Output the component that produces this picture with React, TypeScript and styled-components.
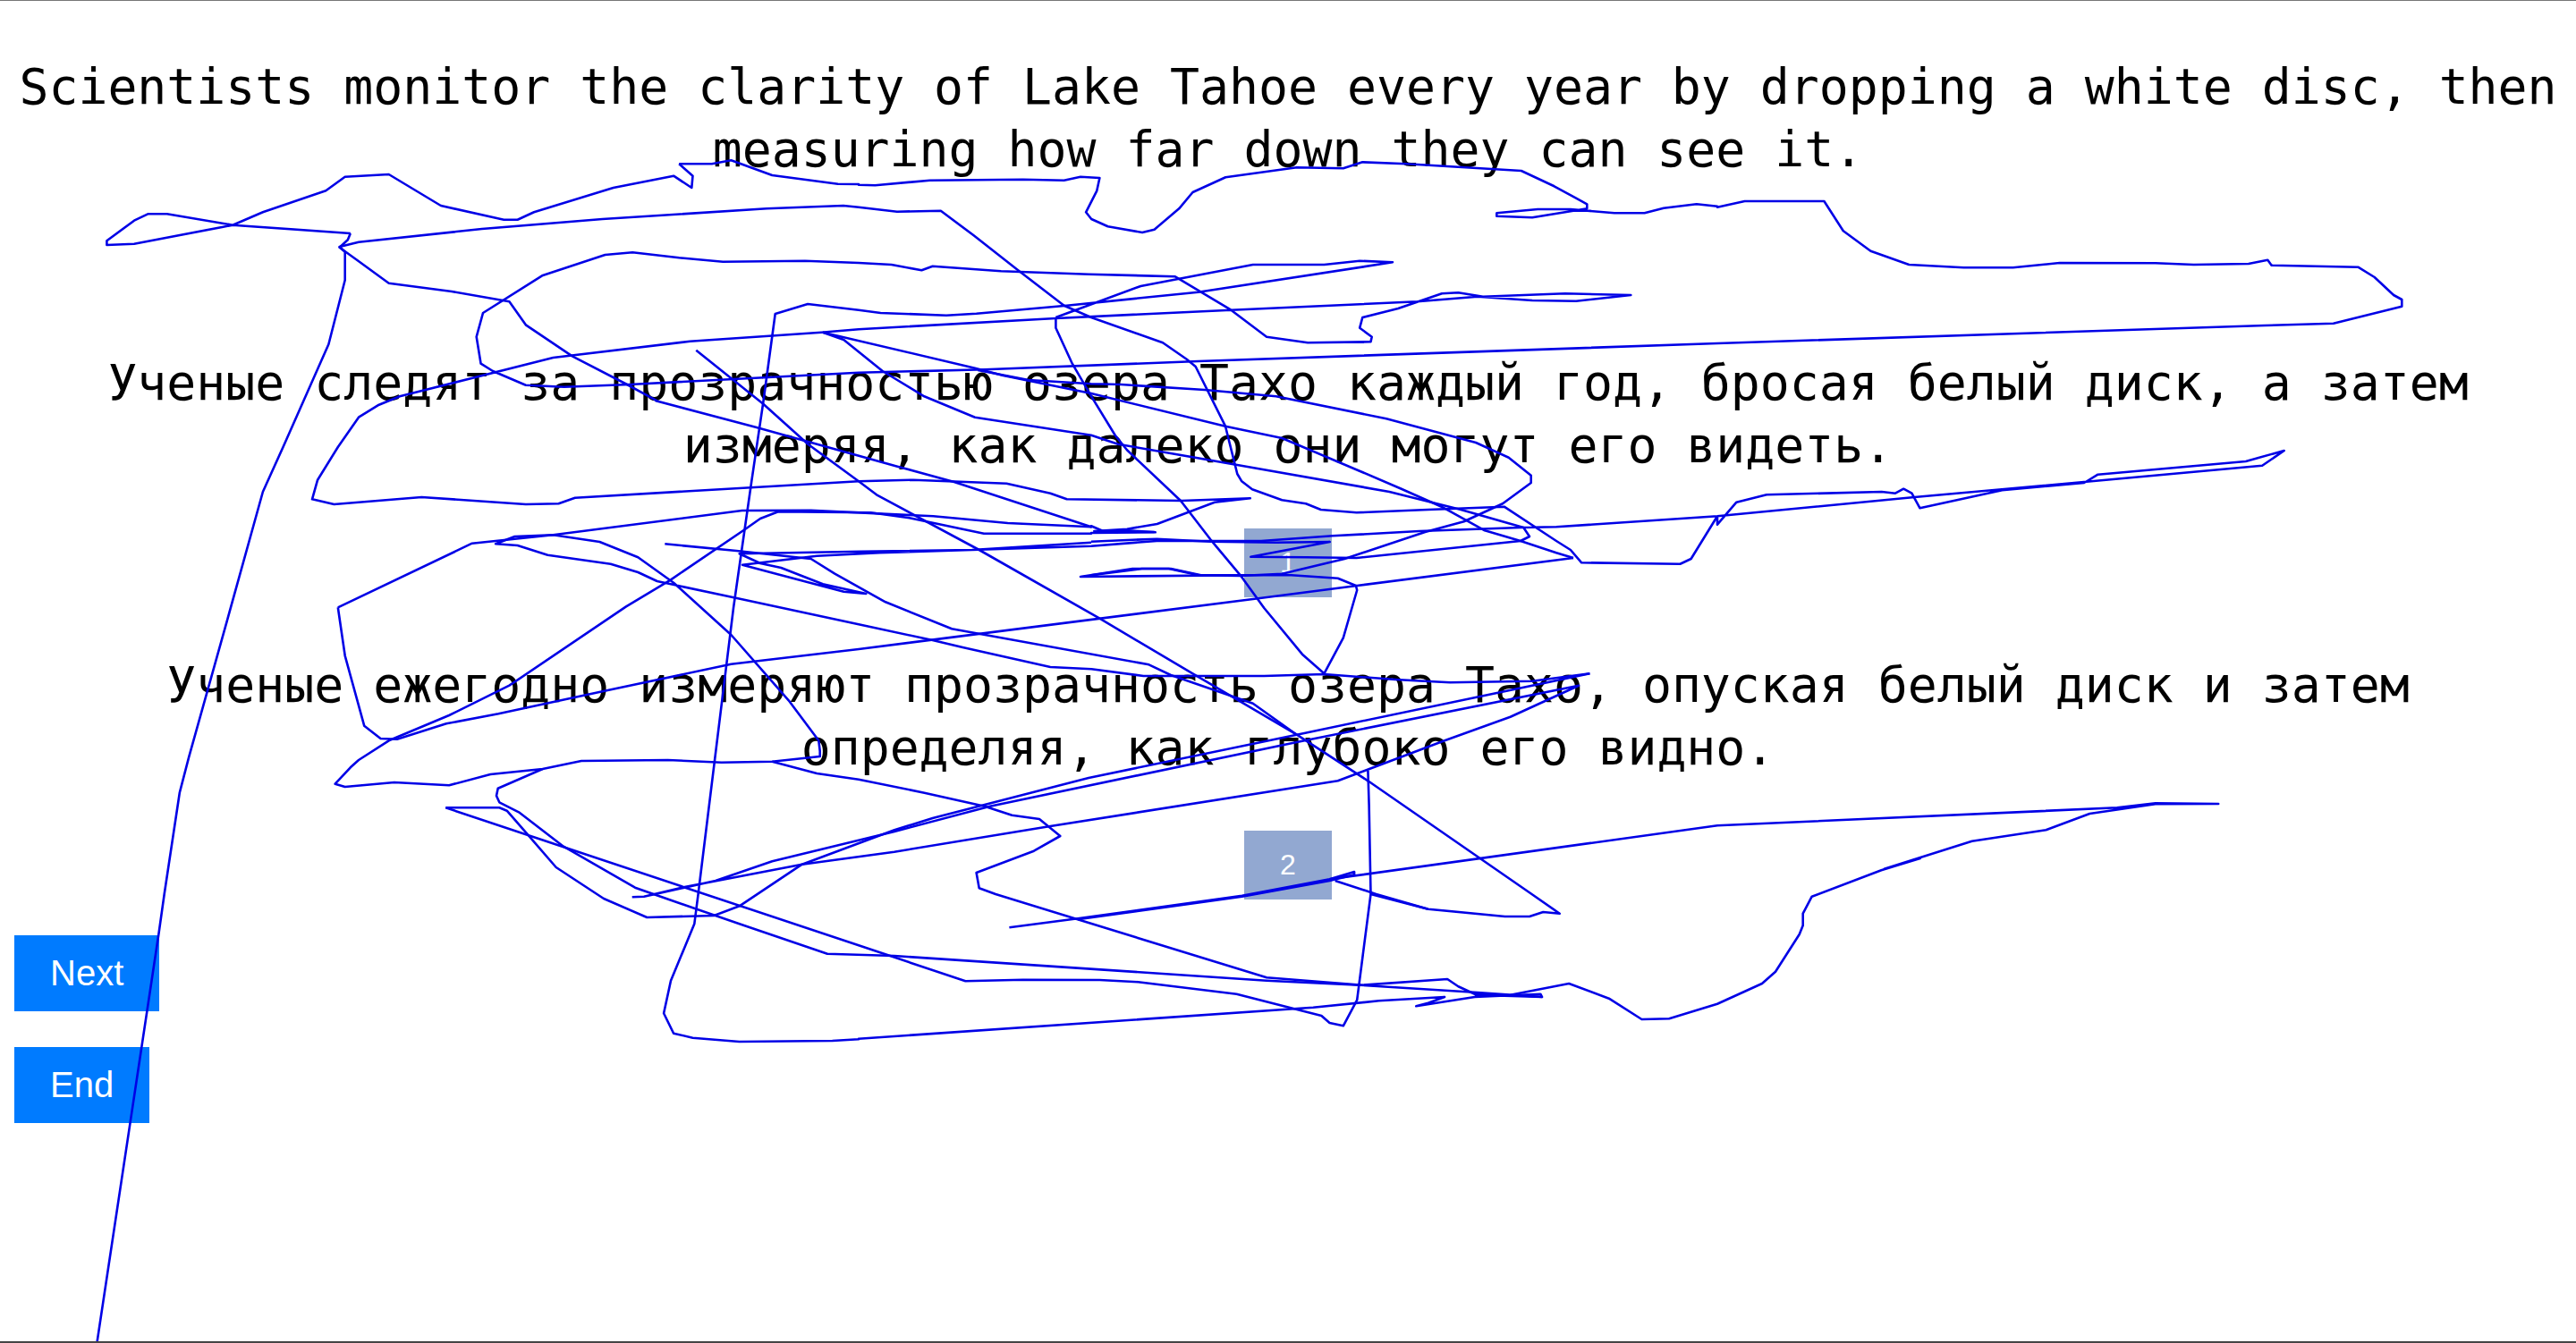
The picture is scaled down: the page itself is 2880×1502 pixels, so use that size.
import React from "react";
import styled, { createGlobalStyle } from "styled-components";

const Global = createGlobalStyle`
  html, body { margin: 0; padding: 0; background: #fff; }
  #root { width: 2880px; height: 1502px; overflow: hidden; }
`;

const Page = styled.main`
  position: relative;
  box-sizing: border-box;
  width: 2880px;
  height: 1502px;
  padding-top: 61px;
  border-top: 1px solid #777;
  border-bottom: 2px solid #444;
  background: #fff;
  overflow: hidden;
`;

const Passage = styled.p<{ $gap: number }>`
  margin: ${(p) => p.$gap}px 0 0;
  padding: 0 16px;
  font-family: "DejaVu Sans Mono", monospace;
  font-size: 54.8px;
  line-height: 70px;
  color: #000;
  text-align: center;
`;

const BadgeRow = styled.div`
  display: flex;
  justify-content: center;
  margin-top: 58px;
`;

const Badge = styled.div`
  padding: 20px 40px;
  height: 37px;
  background: #92a8d1;
  color: #fff;
  font-family: "Liberation Sans", Arial, sans-serif;
  font-size: 32px;
  line-height: 37px;
`;

const Actions = styled.div`
  display: flex;
  flex-direction: column;
  align-items: flex-start;
  gap: 40px;
  margin: 40px 0 0 16px;
`;

const ActionButton = styled.button`
  height: 85px;
  padding: 0 40px;
  border: 0;
  border-radius: 0;
  background: #007bff;
  color: #fff;
  font-family: "Liberation Sans", Arial, sans-serif;
  font-size: 40px;
`;

const Scribble = styled.svg`
  position: absolute;
  left: 0;
  top: -1px;
  width: 2880px;
  height: 1502px;
  pointer-events: none;
`;

type Part = [string, string];
const origins: Record<string, [number, number, number, number]> = {
  T1: [0, 0, 1.6333, 3],
  T2: [960, 0, 1.6333, 3],
  T3: [1920, 0, 1.6333, 3],
  T4: [0, 500, 1.6333, 3],
  T5: [960, 500, 1.6333, 3],
  T6: [1920, 500, 1.6333, 3],
  T7: [0, 1000, 1.6333, 3],
  T8: [960, 1000, 1.6333, 3],
  Z9: [1920, 960, 3, 3],
  Z10: [700, 340, 3, 3],
  Z11: [1220, 340, 3, 3],
  Z12: [480, 840, 3, 3],
};

const chains: Part[][] = [
  [
    ["T1", "1240,550 1300,550 1335,538 1410,588 1530,617 1568,618"],
    ["T2", "0,620 30,622 130,605 300,602 375,605 405,593 440,597 435,640 415,712 425,735 455,760 518,780 540,770 585,700 610,645 670,595 800,562 885,565 920,544 1000,550 1210,573 1270,625 1310,665 1330,685 1330,700 1230,730 1165,725 1165,715 1240,702 1300,702 1380,715 1435,715 1470,698 1530,685 1568,692"],
    ["T3", "0,695 50,675 195,675 230,775 280,842 350,888 450,898 540,898 625,882 800,883 870,888 970,885 1005,872 1012,890 1170,896 1200,930 1235,990 1250,1005 1250,1028 1125,1085 1000,1092 0,1152"],
    ["T2", "620,1212 230,1240 0,1250"],
    ["T1", "1150,1290 1030,1298 960,1292 900,1245 878,1220 870,1130 882,1050 990,925 1105,855 1155,847 1240,865 1320,878 1470,875 1568,882"],
    ["T2", "0,882 60,888 115,907 135,893 260,910 420,920 578,928 680,1040 745,1130 820,1150 935,1147 937,1130 915,1100 920,1065 985,1035 1065,985 1095,982 1140,995 1290,985 1410,990 1310,1010 1230,1008 1130,995 1020,1012 680,1040 360,1068 0,1105"],
    ["T1", "1500,1115 1260,1145 1010,1200 730,1330 690,1360 655,1400 617,1500"],
    ["T4", "580,110 570,175 610,192 770,168 960,192 1020,190 1050,170 1568,115"],
    ["T5", "100,110 270,122 350,155 380,175 590,180 715,172 650,185 545,258 490,275 430,282 540,285"],
  ],
  [
    ["T2", "360,1065 515,960 720,888 850,888 915,875 975,880 620,980 380,1025 215,1052 160,1058 40,1050 0,1040"],
    ["T1", "1475,1020 1417,1052"],
    ["Z10", "500,33 460,330 420,600 370,950 360,1020"],
    ["T7", "1275,0 1268,100 1225,290 1212,400 1230,467 1265,482 1350,495 1520,492 1568,487"],
    ["T8", "0,485 830,380 950,358 1070,345 1040,365 1018,376 1125,345 1190,340 1245,335 1248,345 1125,338"],
  ],
  [
    ["T2", "360,1065 360,1100 390,1220 425,1330"],
    ["Z11", "80,440 120,490 300,660 400,790 500,910 580,1020"],
    ["T5", "810,695 850,760 885,640 910,480 908,465 875,440 790,430 625,430 570,408 500,408 405,435 700,430"],
  ],
  [
    ["T1", "640,783 635,805 620,830 650,870 710,950 825,978 930,1012 960,1090 1045,1195 1145,1290 1200,1345"],
    ["Z10", "100,325 440,415 910,545 1100,597 1560,748"],
    ["Z11", "0,745 40,762 125,760 215,766 0,768"],
    ["Z10", "1560,770 1200,770 950,718 820,700 510,697 450,720 400,755 150,925 0,1015"],
    ["T4", "930,800 820,900 710,985 655,1050 640,1075 612,1130 630,1140 720,1125 820,1135"],
    ["Z12", "205,78 380,60 510,33 800,30 980,38 1150,35 1310,18 1310,0"],
    ["T4", "1495,985 1440,850 1335,630 1230,455 1165,370 1095,318 1010,295 940,300 905,325 945,330 1000,362 1115,392 1165,420 1200,450 1340,505 1568,595"],
    ["T5", "135,648 190,672 350,738 425,745 520,768 740,768 850,762 980,780 1080,790 1230,785 1335,760"],
  ],
  [
    ["T4", "617,538 862,323 1010,295 1355,213"],
    ["Z10", "620,692 1030,712 1280,735 1560,748"],
  ],
  [
    ["T4", "617,538 630,700 665,935 695,978 725,980 815,928 910,895 1100,820 1335,728 1568,678"],
    ["T5", "720,510 910,465 1305,372"],
  ],
  [
    ["Z10", "1560,800 1160,825 790,830 380,838 450,870 520,885 660,940 805,972 730,965 520,910 390,875 640,845 850,835 1160,825 1560,812"],
    ["Z11", "0,812 220,795 570,795 810,778 1100,762 1440,750 1560,748"],
    ["T5", "1568,232"],
    ["T6", "360,168 665,118 995,62 1035,12 965,48 695,92 670,120 520,145 370,205 355,155 340,140 325,155 300,150 90,160 35,185 0,260"],
    ["T5", "1568,232 1520,375 1500,392 1320,388 1300,345"],
    ["Z11", "1560,795 1385,680 1130,690 890,700 770,690 720,670 640,658 540,622 505,595 490,570 450,410 350,210 320,185 240,130 0,45"],
    ["T2", "375,1025 290,905 210,790 150,707 70,710 0,695"],
    ["T1", "1540,690 1400,700 1100,735 880,768 655,812 620,828 630,845 630,940 600,1155 517,1500"],
    ["T4", "480,150 415,580 377,830 345,1040 328,1160 300,1500"],
    ["T7", "290,130 177,1506"],
  ],
  [
    ["Z10", "1180,222 1350,255 1560,268"],
    ["Z11", "100,270 380,288 620,310 990,385 1290,465 1400,515 1475,575 1475,600 1380,670 1250,730 1120,765 850,855 640,905 500,912 360,910 260,888 170,888 0,910"],
  ],
  [
    ["Z10", "660,95 1170,215 1265,240 1560,300"],
    ["Z11", "450,410 640,450 900,560 1040,620 1175,680 1320,760 1440,795 1560,835"],
    ["T5", "1305,372"],
  ],
  [
    ["Z10", "660,95 730,120 860,225 1000,310 1170,380 1560,440"],
    ["Z11", "90,470 490,540 1000,630 1240,690 1450,750 1470,780 1440,795 890,852 720,850 535,848 800,798 620,800 400,797 220,788 0,797"],
  ],
  [
    ["Z10", "235,155 460,335 610,470 780,595 840,640"],
    ["T5", "220,345 440,575 610,760 800,965 930,1120 1225,1495"],
    ["T8", "1280,65 1250,60 1225,75 1180,75 1040,50 935,0"],
  ],
  [
    ["Z10", "130,805 370,828 620,855 700,905 870,1000"],
    ["T5", "170,610 530,730 570,765 720,860 800,965"],
  ],
  [
    ["Z12", "1150,35 1300,75"],
    ["T4", "1568,1115"],
    ["T5", "120,1160 230,1205 280,1235 330,1248 368,1305 320,1355 215,1428 220,1480 250,1500"],
    ["T8", "745,280 920,305 1075,285 1095,310 1125,335 1190,340"],
  ],
  [
    ["Z12", "380,60 230,125 225,150 235,172 300,205 450,320 690,458 780,490 1040,580 1335,680"],
    ["T8", "65,207 745,290 915,305 1130,330 1248,345"],
  ],
  [
    ["Z12", "55,190 235,190 260,200 330,280 425,390 585,495 730,558 955,552 1040,520 1250,380 1560,265"],
    ["T5", "135,1245 420,1110 800,965 1335,760"],
  ],
  [
    ["Z12", "680,490 720,488 960,435 1150,370 1560,270"],
    ["T5", "240,1205 800,990 1315,800 1190,905 1070,985 925,1085 875,1120 350,1272 65,1358"],
    ["Z12", "1250,380 860,455 720,488"],
  ],
  [
    ["Z12", "55,190"],
    ["T8", "0,172 195,292 300,287 440,288 510,295 690,335 845,408 860,432 885,442 910,355 935,0"],
    ["T5", "932,1200 930,1085"],
  ],
  [
    ["T8", "275,112 400,82 700,5"],
    ["T5", "860,1450 905,1425 905,1435 860,1455"],
    ["T8", "700,8 400,85"],
  ],
  [
    ["T5", "860,1450 1568,1270"],
    ["T6", "730,1210 800,1195 915,1197 800,1198 680,1230 600,1285 465,1322 305,1415"],
    ["Z9", "680,0 550,40 317,128 287,185 287,225 275,255 195,380 150,420 0,488"],
    ["T8", "1480,418 1430,420 1370,350 1297,300 1190,338"],
  ],
  [
    ["T5", "870,1455 945,1500"],
    ["T8", "1040,50"],
  ],
  [
    ["T1", "1240,550 1265,590 1263,630 1230,590 1120,630 975,712 945,737 920,737 805,690 710,585 630,593 595,640 480,712 425,755 245,818 195,822 195,808 245,740 270,718 305,718 425,755 640,783"],
  ],
];

const toPoints = (chain: Part[]) =>
  chain
    .flatMap(([tile, pts]) => {
      const [ox, oy, sx, sy] = origins[tile];
      return pts.split(" ").map((p) => {
        const [x, y] = p.split(",").map(Number);
        return `${(ox + x / sx).toFixed(1)},${(oy + y / sy).toFixed(1)}`;
      });
    })
    .join(" ");

export default function App() {
  return (
    <Page>
      <Global />
      <Passage $gap={0}>
        Scientists monitor the clarity of Lake Tahoe every year by dropping a white disc, then measuring how far down they can see it.
      </Passage>
      <Passage $gap={191}>
        Ученые следят за прозрачностью озера Тахо каждый год, бросая белый диск, а затем измеряя, как далеко они могут его видеть.
      </Passage>
      <BadgeRow>
        <Badge>1</Badge>
      </BadgeRow>
      <Passage $gap={63}>
        Ученые ежегодно измеряют прозрачность озера Тахо, опуская белый диск и затем определяя, как глубоко его видно.
      </Passage>
      <BadgeRow>
        <Badge>2</Badge>
      </BadgeRow>
      <Actions>
        <ActionButton>Next</ActionButton>
        <ActionButton>End</ActionButton>
      </Actions>
      <Scribble viewBox="0 0 2880 1502" fill="none">
        {chains.map((c, i) => (
          <polyline key={i} points={toPoints(c)} stroke="#0000e6" strokeWidth={2.6} strokeLinejoin="round" />
        ))}
      </Scribble>
    </Page>
  );
}
